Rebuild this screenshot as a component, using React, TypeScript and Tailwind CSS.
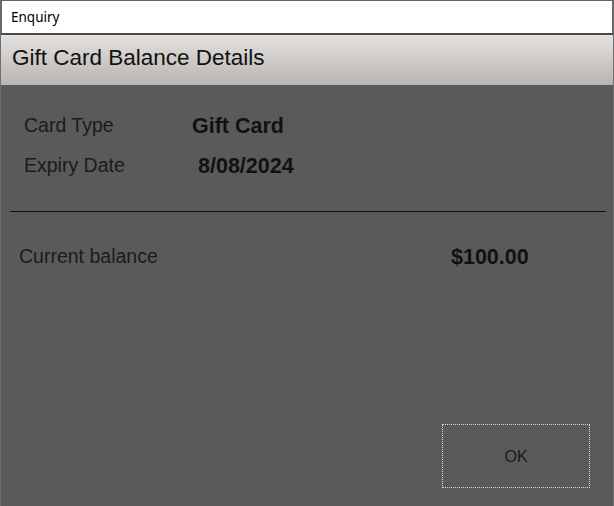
import React from 'react';

const App: React.FC = () => {
  return (
    <div
      className="w-[614px] h-[506px] flex flex-col bg-[#5a5a5a] border-x border-[#6e6e6e] overflow-hidden"
      style={{ fontFamily: '"Liberation Sans", Arial, sans-serif' }}
    >
      {/* Window title */}
      <div className="h-[33px] shrink-0 bg-white border border-[#646464] border-b-0 flex items-center pl-[9px] text-[13.5px] text-black" style={{ fontFamily: '"Noto Sans", sans-serif' }}>
        Enquiry
      </div>
      <div className="h-[2px] shrink-0 bg-[#4a4a4a]" />

      {/* Header */}
      <div className="h-[50px] shrink-0 bg-gradient-to-b from-[#e3e1df] to-[#bab4b0] flex items-center pl-[11px] pb-[4px] text-[22.5px] text-[#111]">
        Gift Card Balance Details
      </div>

      {/* Body */}
      <div className="flex-1 flex flex-col text-[#1b1b1b]">
        <div className="pt-[30px] pl-[23px] flex flex-col gap-[18px] text-[19.5px]">
          <div className="flex items-center h-[22px]">
            <span className="w-[168px]">Card Type</span>
            <span className="font-bold text-[21.5px] text-[#111]">Gift Card</span>
          </div>
          <div className="flex items-center h-[22px]">
            <span className="w-[174px]">Expiry Date</span>
            <span className="font-bold text-[21.5px] text-[#111]">8/08/2024</span>
          </div>
        </div>

        <div className="mt-[34px] ml-[9px] mr-[7px] h-[1px] bg-[#111]" />

        <div className="mt-[34px] pl-[18px] flex items-center h-[22px] text-[19.5px]">
          <span className="w-[432px]">Current balance</span>
          <span className="font-bold text-[21.5px] text-[#111]">$100.00</span>
        </div>

        <div className="flex-1" />

        <div className="flex justify-end pr-[23px] pb-[18px]">
          <button className="w-[148px] h-[64px] border border-dotted border-[#d8d8d8] text-[16px] text-[#1b1b1b] flex items-center justify-center pt-[1px]">
            OK
          </button>
        </div>
      </div>
    </div>
  );
};

export default App;
